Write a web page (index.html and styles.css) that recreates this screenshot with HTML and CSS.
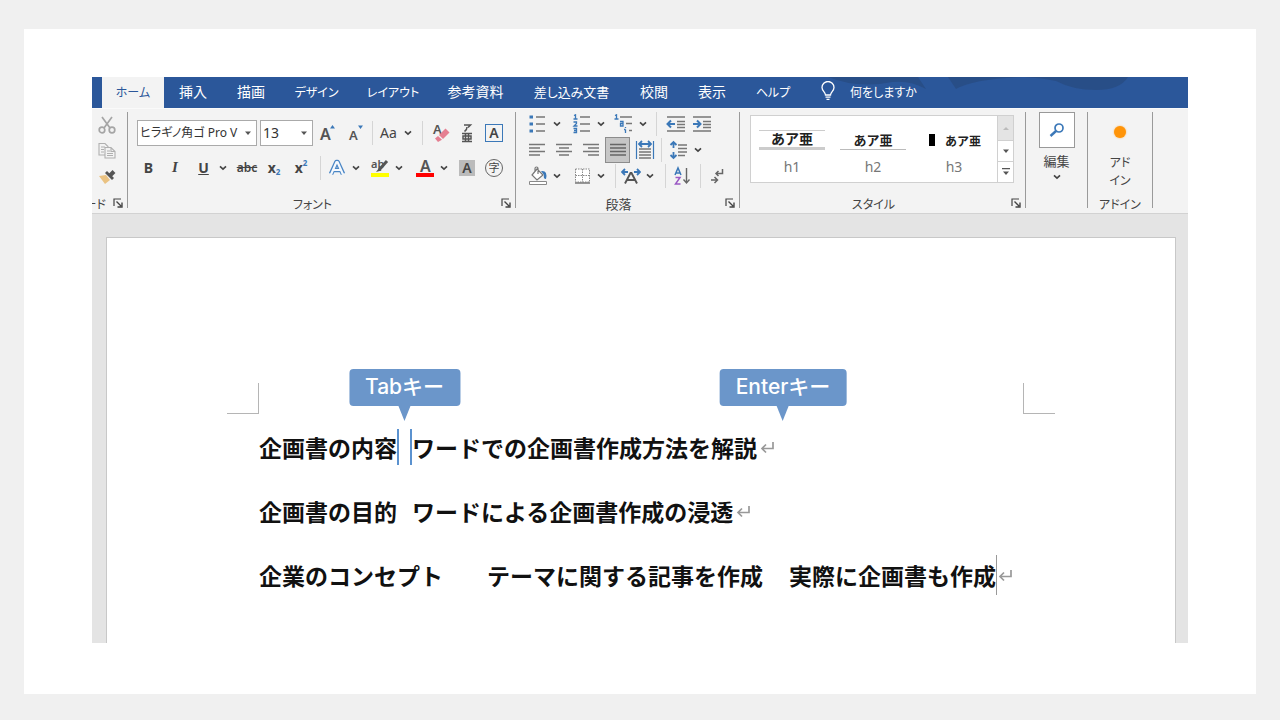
FILE: index.html
```html
<!DOCTYPE html>
<html lang="ja">
<head>
<meta charset="utf-8">
<title>企画書</title>
<link rel="stylesheet" href="styles.css">
</head>
<body>
<svg class="defs" aria-hidden="true">
  <symbol id="chev" viewBox="0 0 8 6"><path d="M1 1.3 4 4.2 7 1.3" fill="none" stroke="#444" stroke-width="1.6"/></symbol>
  <symbol id="tri" viewBox="0 0 8 5"><path d="M1 .5h6L4 4z" fill="#555"/></symbol>
  <symbol id="launch" viewBox="0 0 10 10"><path d="M1 8V1h7" fill="none" stroke="#444" stroke-width="1.2"/><path d="M3.5 3.5 8 8M9 4.5V9H4.5" fill="none" stroke="#444" stroke-width="1.4"/></symbol>
  <symbol id="enter" viewBox="0 0 16 16"><path d="M14 3v6.500H3M7 5.500 3 9.500l4 4" fill="none" stroke="#999" stroke-width="1.700"/></symbol>
</svg>
<main class="card">
  <div class="app">
    <nav class="tabs">
      <svg class="clouds" viewBox="0 0 400 31" aria-hidden="true"><path d="M40 0h90l8 12Q122 3 104 5 70 12 40 0zM160 0h75Q185 2 168 12zM235 0Q255 1 268 4 285 13 308 13 332 13 340 0z" fill="#284b80" opacity=".75"/></svg>
      <button class="tab active">ホーム</button>
      <button class="tab">挿入</button>
      <button class="tab">描画</button>
      <button class="tab kana">デザイン</button>
      <button class="tab kana">レイアウト</button>
      <button class="tab">参考資料</button>
      <button class="tab mixed">差し込み文書</button>
      <button class="tab">校閲</button>
      <button class="tab">表示</button>
      <button class="tab kana">ヘルプ</button>
      <button class="tab tell"><svg width="16" height="20" viewBox="0 0 16 20" fill="none" stroke="#fff" stroke-width="1.3"><path d="M5.500 14c0-3-3.500-4-3.500-7.500a6 6 0 0 1 12 0C14 10 10.500 11 10.500 14zM5.500 16.200h5M6.500 18.400h3"/></svg><span>何をしますか</span></button>
    </nav>

    <div class="ribbon">
      <section class="group clip">
        <button aria-label="切り取り"><svg width="18" height="20" viewBox="0 0 18 20" fill="none" stroke="#a5a5a5" stroke-width="1.7"><path d="M4 2l8 11M14 2 6 13"/><circle cx="4" cy="15" r="2.800"/><circle cx="14" cy="15" r="2.800"/></svg></button>
        <button aria-label="コピー"><svg width="18" height="18" viewBox="0 0 18 18" fill="#f3f3f3" stroke="#b0b0b0" stroke-width="1.1"><path d="M1 1.500h6l3 3V13H1z"/><path d="M7 5.500h6l4 4V16H7zM13 5.500v4h4M9 9h3M9 11.500h6M9 13.500h6M3 5h4M3 7.500h3M3 10h3"/></svg></button>
        <button aria-label="書式のコピー"><svg width="20" height="18" viewBox="0 0 20 18"><path d="M1 8l7-1 4 5-5 4z" fill="#eac282"/><path d="M7 5l7 7 2-2-7-7z" fill="#555"/><path d="M12 7.500 16 3.500" stroke="#555" stroke-width="4"/></svg></button>
        <footer class="glabel"><span class="cut">ード</span><button class="launch" aria-label="クリップボードの詳細"><svg width="10" height="10"><use href="#launch"/></svg></button></footer>
      </section>

      <section class="group font">
        <div class="row font1">
          <label class="pick name"><select aria-label="フォント名"><option>ヒラギノ角ゴ Pro V</option></select><svg width="8" height="5"><use href="#tri"/></svg></label>
          <label class="pick"><select aria-label="フォントサイズ"><option>13</option></select><svg width="8" height="5"><use href="#tri"/></svg></label>
          <button aria-label="拡大"><svg width="18" height="18" viewBox="0 0 18 18"><text x="1" y="16" class="g16">A</text><path d="M11 4.500h5L13.500 1z" fill="#3b78b8"/></svg></button>
          <button aria-label="縮小"><svg width="18" height="18" viewBox="0 0 18 18"><text x="2" y="16" class="g13">A</text><path d="M11 1.500h5L13.500 5z" fill="#3b78b8"/></svg></button>
          <i class="sep"></i>
          <button class="split"><span class="aa">Aa</span><svg width="8" height="6"><use href="#chev"/></svg></button>
          <i class="sep"></i>
          <button aria-label="書式のクリア"><svg width="20" height="20" viewBox="0 0 20 20"><text x="2" y="11" class="g13">A</text><path d="M8 12l6.500-6.500 4 4L12 16z" fill="#e57f92"/><path d="M7 13 4 15.500 7 19l4-2.200z" fill="#e57f92"/></svg></button>
          <button class="ruby" aria-label="ルビ"><svg width="12" height="20" viewBox="0 0 12 20" fill="none" stroke="#555" stroke-width="1.500"><path d="M3 2h6.500L7 4.500M6 4q0 3-2.500 4.500M1 10.500h10M1 18.500h10M4.500 10.500v8M7.500 10.500v8M2 13h8v3H2z"/></svg></button>
          <button aria-label="囲み線"><span class="boxed">A</span></button>
        </div>
        <div class="row font2">
          <button class="strong">B</button>
          <button class="ital">I</button>
          <button class="split"><u class="strong">U</u><svg width="8" height="6"><use href="#chev"/></svg></button>
          <button><s class="strike">abc</s></button>
          <button class="strong">x<sub>2</sub></button>
          <button class="strong">x<sup>2</sup></button>
          <i class="sep"></i>
          <button class="split" aria-label="文字の効果"><svg width="20" height="20" viewBox="0 0 20 20" stroke-linejoin="round"><path d="M4 16 9.500 4h1L16 16M6 12h8" fill="none" stroke="#4a86c5" stroke-width="4.600"/><path d="M4 16.500 9.500 4h1L16 16.500M6.500 12h7" fill="none" stroke="#f6f9fd" stroke-width="2.200"/></svg><svg width="8" height="6"><use href="#chev"/></svg></button>
          <button class="split" aria-label="蛍光ペン"><svg width="20" height="20" viewBox="0 0 20 20"><text x="1" y="10" class="g11">ab</text><path d="M17 3 9 12" stroke="#555" stroke-width="3"/><path d="M9 10l2.500 2.500L6 14z" fill="#555"/><path d="M1 15h18v4H1z" fill="#ff0"/></svg><svg width="8" height="6"><use href="#chev"/></svg></button>
          <button class="split" aria-label="文字の色"><svg width="20" height="20" viewBox="0 0 20 20"><text x="5" y="14" class="g16">A</text><path d="M1 15h18v4H1z" fill="red"/></svg><svg width="8" height="6"><use href="#chev"/></svg></button>
          <button><span class="shade">A</span></button>
          <button><span class="ring">字</span></button>
        </div>
        <footer class="glabel kana"><span>フォント</span><button class="launch" aria-label="フォントの詳細"><svg width="10" height="10"><use href="#launch"/></svg></button></footer>
      </section>

      <section class="group para">
        <div class="row para1">
          <button class="split" aria-label="箇条書き"><svg width="20" height="18" viewBox="0 0 20 18"><path d="M8 2h9M8 9h9M8 16h9" stroke="#777" stroke-width="1.300"/><path d="M1.500 .5h3.500v3H1.500zM1.500 7.500h3.500v3H1.500zM1.500 14.500h3.500v3H1.500z" fill="#3b78b8"/></svg><svg width="8" height="6"><use href="#chev"/></svg></button>
          <button class="split" aria-label="段落番号"><svg width="20" height="20" viewBox="0 0 20 20"><path d="M8 3h10M8 10h10M8 17h10" stroke="#777" stroke-width="1.300"/><path d="M2 1.500 3.500.8V5M1.500 5h4M1.500 8h3v1.500l-2.500 2.500h3.500M1.500 14.500h3v4h-3M2 16.500h2.500" fill="none" stroke="#3b78b8" stroke-width="1.300"/></svg><svg width="8" height="6"><use href="#chev"/></svg></button>
          <button class="split" aria-label="アウトライン"><svg width="20" height="20" viewBox="0 0 20 20"><path d="M6 3h12M12 9.500h6M15 16.500h3" stroke="#777" stroke-width="1.300"/><path d="M1 1.500 2.500.8V5M.5 5h4M6 7.500h3V12H6.500V9.500H9M11.500 13v1M11.500 15.500V19M10 15.500H11.500" fill="none" stroke="#3b78b8" stroke-width="1.300"/></svg><svg width="8" height="6"><use href="#chev"/></svg></button>
          <i class="sep"></i>
          <button aria-label="インデント減"><svg width="20" height="18" viewBox="0 0 20 18"><path d="M1 2h18M11 6.500h8M11 9.500h8M11 12.500h8M1 16h18" stroke="#777" stroke-width="1.300"/><path d="M1 9h8M5 5.500 1.500 9 5 12.500" fill="none" stroke="#3b78b8" stroke-width="2"/></svg></button>
          <button aria-label="インデント増"><svg width="20" height="18" viewBox="0 0 20 18"><path d="M1 2h18M11 6.500h8M11 9.500h8M11 12.500h8M1 16h18" stroke="#777" stroke-width="1.300"/><path d="M1 9h8M5 5.500 8.500 9 5 12.500" fill="none" stroke="#3b78b8" stroke-width="2"/></svg></button>
        </div>
        <div class="row para2">
          <button aria-label="左揃え"><svg width="16" height="14" viewBox="0 0 16 14" stroke="#777" stroke-width="1.300"><path d="M0 1.500h16M0 5h11M0 8.500h16M0 12h11"/></svg></button>
          <button aria-label="中央揃え"><svg width="16" height="14" viewBox="0 0 16 14" stroke="#777" stroke-width="1.300"><path d="M0 1.500h16M3 5h10M0 8.500h16M3 12h10"/></svg></button>
          <button aria-label="右揃え"><svg width="16" height="14" viewBox="0 0 16 14" stroke="#777" stroke-width="1.300"><path d="M0 1.500h16M5 5h11M0 8.500h16M5 12h11"/></svg></button>
          <button class="pressed" aria-label="両端揃え"><svg width="16" height="14" viewBox="0 0 16 14" stroke="#666" stroke-width="1.300"><path d="M0 1.500h16M0 5h16M0 8.500h16M0 12h16"/></svg></button>
          <button aria-label="均等割り付け"><svg width="20" height="20" viewBox="0 0 20 20"><path d="M1.500 1v18M18.500 1v18" stroke="#3b78b8" stroke-width="1.200"/><path d="M4 4h12M7 1 4 4l3 3M13 1l3 3-3 3" fill="none" stroke="#3b78b8" stroke-width="1.800"/><path d="M4 9h12M4 12h12M4 15h12M4 18h12" stroke="#777" stroke-width="1.700"/></svg></button>
          <i class="sep"></i>
          <button class="split" aria-label="行間"><svg width="20" height="20" viewBox="0 0 20 20"><path d="M4.500 2v6M4.500 12v6M1.500 5l3-3 3 3M1.500 15l3 3 3-3" fill="none" stroke="#3b78b8" stroke-width="1.800"/><path d="M9 5h9M9 8.500h9M9 12h9M9 15.500h7" stroke="#777" stroke-width="1.400"/></svg><svg width="8" height="6"><use href="#chev"/></svg></button>
        </div>
        <div class="row para3">
          <button class="split" aria-label="塗りつぶし"><svg width="20" height="20" viewBox="0 0 20 20"><path d="M9 3l6 6-6 5-5-5zM7 5V2.500a1.500 1.500 0 0 1 3 0V8" fill="#fff" stroke="#777" stroke-width="1.200"/><path d="M13 5q7-1 5 8-3 0-2-4z" fill="#3b78b8"/><path d="M1.500 15.500h17v3h-17z" fill="#fff" stroke="#888"/></svg><svg width="8" height="6"><use href="#chev"/></svg></button>
          <button class="split" aria-label="罫線"><svg width="20" height="18" viewBox="0 0 20 18"><path d="M3.500 2h14v13h-14zM10.500 2v13M3.500 8.500h14" fill="#fff" stroke="#888" stroke-dasharray="1.500 1"/><path d="M3 16h15" stroke="#777" stroke-width="1.500"/></svg><svg width="8" height="6"><use href="#chev"/></svg></button>
          <i class="sep"></i>
          <button class="split" aria-label="拡張書式"><svg width="20" height="18" viewBox="0 0 20 18"><path d="M1 5h6M4 2 1 5l3 3M13 5h6M16 2l3 3-3 3" fill="none" stroke="#3b78b8" stroke-width="1.800"/><path d="M4 16.500 9.500 6h1L16 16.500M6 13h8" fill="none" stroke="#555" stroke-width="1.900"/></svg><svg width="8" height="6"><use href="#chev"/></svg></button>
          <i class="sep"></i>
          <button aria-label="並べ替え"><svg width="18" height="20" viewBox="0 0 18 20"><path d="M2 9 5 2l3 7M3 7h4" fill="none" stroke="#3b78b8" stroke-width="1.500"/><path d="M2.500 11.500H7L2.500 18H7.500" fill="none" stroke="#9b59c4" stroke-width="1.500"/><path d="M13.500 2v15M10.500 13.500l3 3.500 3-3.500" fill="none" stroke="#666" stroke-width="1.400"/></svg></button>
          <i class="sep"></i>
          <button aria-label="編集記号"><svg width="14" height="16" viewBox="0 0 14 16" fill="none" stroke="#666" stroke-width="1.500"><path d="M12.500 1v4.500H6M8.500 3 6 5.500 8.500 8M1 12h6M4.500 9 7.500 12l-3 3"/></svg></button>
        </div>
        <footer class="glabel"><span>段落</span><button class="launch" aria-label="段落の詳細"><svg width="10" height="10"><use href="#launch"/></svg></button></footer>
      </section>

      <section class="group styles">
        <div class="gallery">
          <button class="style"><span class="sample s1">あア亜</span><span class="cap">h1</span></button>
          <button class="style"><span class="sample s2">あア亜</span><span class="cap">h2</span></button>
          <button class="style"><span class="sample s3">あア亜</span><span class="cap">h3</span></button>
          <div class="scroll">
            <button class="off" aria-label="前へ"><svg width="8" height="5" viewBox="0 0 8 5"><path d="M1 4h6L4 1z" fill="#bbb"/></svg></button>
            <button aria-label="次へ"><svg width="8" height="5"><use href="#tri"/></svg></button>
            <button aria-label="その他"><svg width="8" height="8" viewBox="0 0 8 8"><path d="M0 0h8v1.200H0zM1 3.500h6L4 7z" fill="#555"/></svg></button>
          </div>
        </div>
        <footer class="glabel kana"><span>スタイル</span><button class="launch" aria-label="スタイルの詳細"><svg width="10" height="10"><use href="#launch"/></svg></button></footer>
      </section>

      <section class="group edit">
        <button class="big"><span class="find"><svg width="16" height="16" viewBox="0 0 16 16" fill="none" stroke="#3b78b8"><circle cx="10" cy="6" r="4" stroke-width="1.700"/><path d="M7 9 1.500 14" stroke-width="2.400"/></svg></span><span>編集</span><svg width="8" height="6"><use href="#chev"/></svg></button>
      </section>

      <section class="group addin">
        <button class="big"><span class="dot"></span><span class="two">アド<br>イン</span></button>
        <footer class="glabel kana"><span>アドイン</span></footer>
      </section>
    </div>

    <div class="desk">
      <article class="page">
        <div class="corners"><i></i><i></i></div>
        <div class="text">
          <p><span>企画書の内容</span><span class="gap marked"><span class="tip">Tabキー</span></span><span>ワードでの企画書作成方法を解説</span><span class="mark"><svg width="16" height="16"><use href="#enter"/></svg><span class="tip">Enterキー</span></span></p>
          <p><span>企画書の目的</span><span class="gap"></span><span>ワードによる企画書作成の浸透</span><span class="mark"><svg width="16" height="16"><use href="#enter"/></svg></span></p>
          <p><span>企業のコンセプト</span><span class="gap wide"></span><span>テーマに関する記事を作成</span><span class="gap mid"></span><span>実際に企画書も作成</span><span class="caret"></span><span class="mark"><svg width="16" height="16"><use href="#enter"/></svg></span></p>
        </div>
      </article>
    </div>
  </div>
</main>
</body>
</html>
```

FILE: styles.css
```css
* { box-sizing: border-box; }
body {
  margin: 0;
  min-height: 100vh;
  padding: 29px 24px 26px;
  display: flex;
  background: #f0f0f0;
  color: #444;
  font-family: "Noto Sans", "Noto Sans CJK JP", sans-serif;
  font-size: 13px;
}
button, select { font: inherit; color: inherit; border: 0; background: none; padding: 0; margin: 0; }
svg { display: block; flex: none; }
.defs { position: absolute; width: 0; height: 0; }

.card { flex: 1; display: flex; background: #fff; padding: 48px 68px 51px; }
.app { flex: 1; min-width: 0; display: flex; flex-direction: column; overflow: hidden; background: #f3f3f3; }

.tabs {
  position: relative;
  display: grid;
  grid-template-columns: 62px 58px 58px 73px 80px 85px 107px 58px 58px 64px auto;
  justify-content: start;
  height: 31px;
  padding-left: 10px;
  background: #2b579a;
}
.clouds { position: absolute; right: 0; top: 0; width: 400px; height: 31px; }
.tab {
  position: relative;
  padding-bottom: 3px;
  color: #fff;
  font-family: "Noto Sans CJK JP", sans-serif;
  font-size: 14px;
  font-feature-settings: "palt";
  white-space: nowrap;
}
.tab.mixed { font-size: 13px; }
.tab.kana { font-size: 12px; }
.tab.active { background: #f3f3f3; color: #2b579a; font-size: 12px; }
.tab.tell { display: flex; align-items: center; gap: 14px; padding-left: 15px; font-size: 12px; }

.ribbon {
  display: flex;
  height: 106px;
  border-bottom: 1px solid #d2d2d2;
  border-top: 1px solid #fafafa;
}
.group {
  display: flex;
  flex-direction: column;
  padding: 3px 1px 0 0;
  background: linear-gradient(#9a9a9a, #9a9a9a) right 3px / 1px 96px no-repeat;
}
.clip { width: 36px; }
.clip > button { height: 26px; padding-left: 6px; display: flex; align-items: center; }
.font { width: 388px; padding-top: 6px; }
.para { width: 224px; }
.styles { width: 286px; padding-top: 6px; }
.edit { width: 62px; }
.addin { width: 65px; }
.glabel {
  margin-top: auto;
  height: 20px;
  display: flex;
  align-items: center;
  font-family: "Noto Sans CJK JP", sans-serif;
  font-feature-settings: "palt";
  white-space: nowrap;
}
.glabel.kana { font-size: 12px; }
.glabel > span { flex: 1; text-align: center; }
.glabel > .cut { display: flex; justify-content: flex-end; width: 14px; flex: none; overflow: hidden; margin-right: 3px; font-size: 12px; }
.launch { width: 18px; display: flex; justify-content: center; flex: none; }

.row { display: grid; align-items: center; }
.row > button { display: flex; align-items: center; justify-content: center; }
.row > .split { gap: 5px; }
.split > :first-child { width: 20px; text-align: center; }
.sep { justify-self: center; width: 1px; height: 24px; background: #d5d5d5; }
.font .row { height: 35px; padding-left: 9px; }
.font1 { grid-template-columns: 123px 53px 30px 26px 6px 40px 14px 24px 28px 26px; }
.font2 { grid-template-columns: 23px 30px 40px 34px 20px 34px 4px 42px 45px 44px 28px 26px; }
.para .row { height: 24px; padding-left: 7px; }
.para .para2 { height: 28px; }
.para1 { grid-template-columns: 42px 47px 37px 14px 25px 28px; }
.para2 { grid-template-columns: 27px 27px 27px 27px 27px 6px 42px; }
.para3 { grid-template-columns: 42px 47px 6px 39px 16px 18px 18px 16px; }
.para3 .split { padding-left: 0; }

.pick { position: relative; display: flex; height: 26px; background: #fff; border: 1px solid #aaa; }
.pick.name { width: 120px; }
.pick select { appearance: none; width: 100%; padding: 0 12px 0 2px; font-size: 14px; font-feature-settings: "palt"; color: #333; outline: 0; }
.pick svg { position: absolute; right: 4px; top: 10px; }
.pick.name select { font-size: 12px; }
.g16, .g13, .g11 { font-family: "Noto Sans", sans-serif; fill: #555; font-weight: 600; }
.g16 { font-size: 16px; }
.g13 { font-size: 13px; }
.g11 { font-size: 11px; }
.aa { font-size: 14px; }
.boxed { width: 18px; height: 18px; border: 1px solid #3b78b8; font-size: 14px; font-weight: 600; line-height: 16px; }
.shade { width: 16px; height: 16px; background: #bbb; font-size: 14px; font-weight: 600; line-height: 16px; }
.ring { width: 18px; height: 18px; border: 1px solid #666; border-radius: 50%; font-size: 11px; line-height: 15px; }
.strong { font-weight: 700; font-size: 14px; }
.ital { font: italic 700 15px "Liberation Serif", serif; }
.strike { font-size: 12px; font-weight: 600; }
.strong sub, .strong sup { font-size: 8px; line-height: 8px; color: #3b78b8; }
.strong sub { align-self: center; margin-top: 9px; }
.strong sup { align-self: center; margin-bottom: 9px; }
.row > .pressed { height: 26px; width: 25px; justify-self: center; background: #c6c6c6; border: 1px solid #8c8c8c; }

.gallery { display: grid; grid-template-columns: repeat(3, 81px) 1fr; height: 68px; margin: 0 11px 0 10px; background: #fff; border: 1px solid #d0d0d0; }
.style { display: flex; flex-direction: column; align-items: center; padding: 14px 0 0 1px; gap: 8px; }
.sample { width: 66px; height: 20px; color: #222; font-weight: 700; font-family: "Noto Sans CJK JP", sans-serif; }
.s1 { border-top: 1px solid #ccc; border-bottom: 3px solid #ccc; line-height: 15px; font-size: 14px; }
.s2 { border-bottom: 1px solid #bbb; font-size: 13px; line-height: 20px; }
.s3 { display: flex; align-items: center; justify-content: space-between; padding: 0 6px 0 8px; font-size: 12px; }
.s3::before { content: ""; width: 6px; height: 12px; background: #000; }
.cap { font-size: 14px; line-height: 18px; color: #777; }
.scroll { display: grid; grid-template-rows: 24px 1fr 1fr; width: 16px; justify-self: end; border-left: 1px solid #d0d0d0; }
.scroll button { display: flex; align-items: center; justify-content: center; border-top: 1px solid #d0d0d0; }
.scroll .off { background: #e4e4e4; border-top: 0; }

.big { display: flex; flex-direction: column; align-items: center; font-family: "Noto Sans CJK JP", sans-serif; line-height: 18px; }
.edit .big { gap: 4px; }
.find { width: 36px; height: 36px; display: grid; place-items: center; background: #fff; border: 1px solid #999; }
.dot { width: 12px; height: 12px; margin: 14px 0 15px; border-radius: 50%; background: #ff9408; box-shadow: 0 0 2px #ffb75a; }
.two { font-size: 12px; font-feature-settings: "palt"; }

.desk { flex: 1; display: flex; padding: 23px 12px 0 14px; background: #e4e4e4; }
.page { flex: 1; background: #fff; border: 1px solid #c8c8c8; border-bottom: 0; padding-top: 145px; }
.corners { display: flex; justify-content: space-between; padding: 0 120px; }
.corners i { width: 32px; height: 31px; border-bottom: 1px solid #b5b5b5; }
.corners i:first-child { border-right: 1px solid #b5b5b5; }
.corners i:last-child { border-left: 1px solid #b5b5b5; }
.text { padding: 1px 0 0 152px; font-family: "Noto Sans CJK JP", sans-serif; font-size: 23px; font-weight: 700; color: #111; }
.text p { display: flex; align-items: center; height: 64px; margin: 0; white-space: nowrap; }
.gap { width: 15px; height: 36px; }
.gap.wide { width: 44px; }
.gap.mid { width: 26px; }
.marked { position: relative; border: solid #5b92cf; border-width: 0 2px; }
.mark { position: relative; width: 16px; margin-left: 2px; }
.caret { width: 1px; height: 40px; background: #999; }
.caret + .mark { margin-left: 0; }
.tip {
  position: absolute;
  left: 50%;
  bottom: 59px;
  transform: translateX(-50%);
  padding: 0 16px 2px;
  border-radius: 4px;
  background: #6b96ca;
  color: #fff;
  font-family: Inter, "Noto Sans CJK JP", sans-serif;
  font-size: 21px;
  font-weight: 500;
  line-height: 35px;
}
.mark .tip { left: 24px; bottom: 49px; }
.tip::after {
  content: "";
  position: absolute;
  left: 50%;
  top: 100%;
  margin-left: -6px;
  border: solid transparent;
  border-width: 15px 6px 0;
  border-top-color: #6b96ca;
}
```
